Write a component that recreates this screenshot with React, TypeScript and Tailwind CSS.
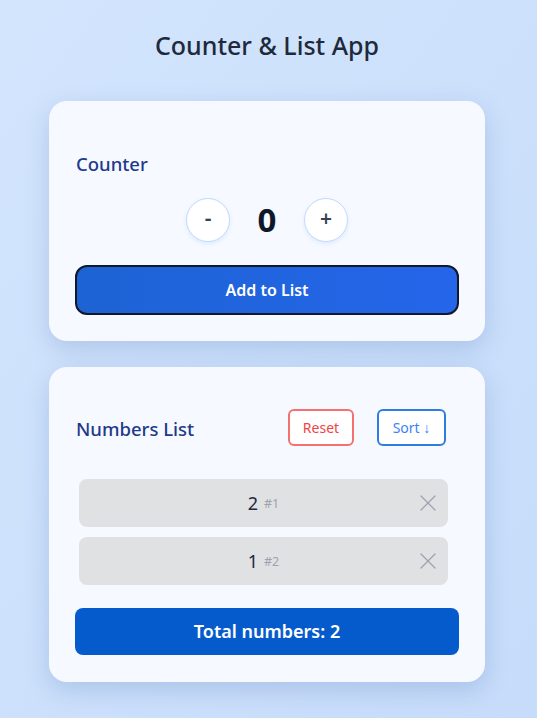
import { X } from 'lucide-react';

export default function App() {
  const items = [
    { value: 2, index: 1 },
    { value: 1, index: 2 },
  ];

  return (
    <div
      className="min-h-screen bg-gradient-to-br from-[#d3e5fd] to-[#c6dcfa] pl-[49px] pr-[52px] pt-[28px] pb-[36px]"
      style={{ fontFamily: '"Noto Sans", "Open Sans", sans-serif' }}
    >
      {/* Title */}
      <h1 className="text-center text-[25px] leading-[34px] font-medium text-[#1e293b] mb-[39px]">
        Counter &amp; List App
      </h1>

      {/* Counter card */}
      <div className="rounded-[18px] bg-[#f6f9ff] shadow-[0_8px_24px_rgba(59,100,170,0.22)] px-[26px] pt-[49px] pb-[26px]">
        <h2 className="text-[18.5px] leading-[28px] font-medium text-[#1e3a8a] ml-[1px]">Counter</h2>
        <div className="flex items-center justify-center gap-[18px] mt-[20px]">
          <button className="w-[44px] h-[44px] rounded-full bg-white border border-[#c3dafb] shadow-[0_2px_4px_rgba(59,130,246,0.12)] text-[21px] font-semibold text-[#374151] flex items-center justify-center pb-[2px]">
            -
          </button>
          <span className="w-[38px] text-center text-[33px] leading-[40px] font-bold text-[#0f172a]">0</span>
          <button className="w-[44px] h-[44px] rounded-full bg-white border border-[#c3dafb] shadow-[0_2px_4px_rgba(59,130,246,0.12)] text-[21px] font-semibold text-[#374151] flex items-center justify-center pb-[2px]">
            +
          </button>
        </div>
        <button className="mt-[23px] w-full h-[50px] rounded-[12px] border-2 border-[#111827] bg-gradient-to-r from-[#1d63d4] to-[#2565ea] text-white text-[16px] font-semibold">
          Add to List
        </button>
      </div>

      {/* List card */}
      <div className="mt-[26px] rounded-[18px] bg-[#f6f9ff] shadow-[0_8px_24px_rgba(59,100,170,0.22)] px-[26px] pt-[42px] pb-[27px]">
        <div className="flex items-center pr-[13px]">
          <h2 className="flex-1 text-[18.5px] leading-[28px] font-medium text-[#1e3a8a] ml-[1px] mt-[3px]">Numbers List</h2>
          <button className="w-[66px] h-[37px] rounded-[6px] border-2 border-[#f47171] text-[#ef4444] text-[14px] bg-white">
            Reset
          </button>
          <button className="ml-[23px] w-[69px] h-[37px] rounded-[6px] border-2 border-[#2f7de1] text-[#3b82f6] text-[14px] bg-white">
            Sort ↓
          </button>
        </div>

        <ul className="mt-[33px] pl-[4px] pr-[11px] flex flex-col gap-[10px]">
          {items.map((item) => (
            <li
              key={item.index}
              className="relative h-[48px] rounded-[8px] bg-[#e0e1e3] flex items-center justify-center"
            >
              <span className="text-[18px] text-[#1e293b]">{item.value}</span>
              <span className="ml-[6px] text-[12.5px] text-[#9ca3af] mt-[2px]">#{item.index}</span>
              <X className="absolute right-[6px] w-[28px] h-[28px] text-[#9ca3af]" strokeWidth={1.1} />
            </li>
          ))}
        </ul>

        <div className="mt-[23px] h-[47px] rounded-[8px] bg-[#065bcc] flex items-center justify-center text-white text-[18px] font-semibold">
          Total numbers: 2
        </div>
      </div>
    </div>
  );
}
